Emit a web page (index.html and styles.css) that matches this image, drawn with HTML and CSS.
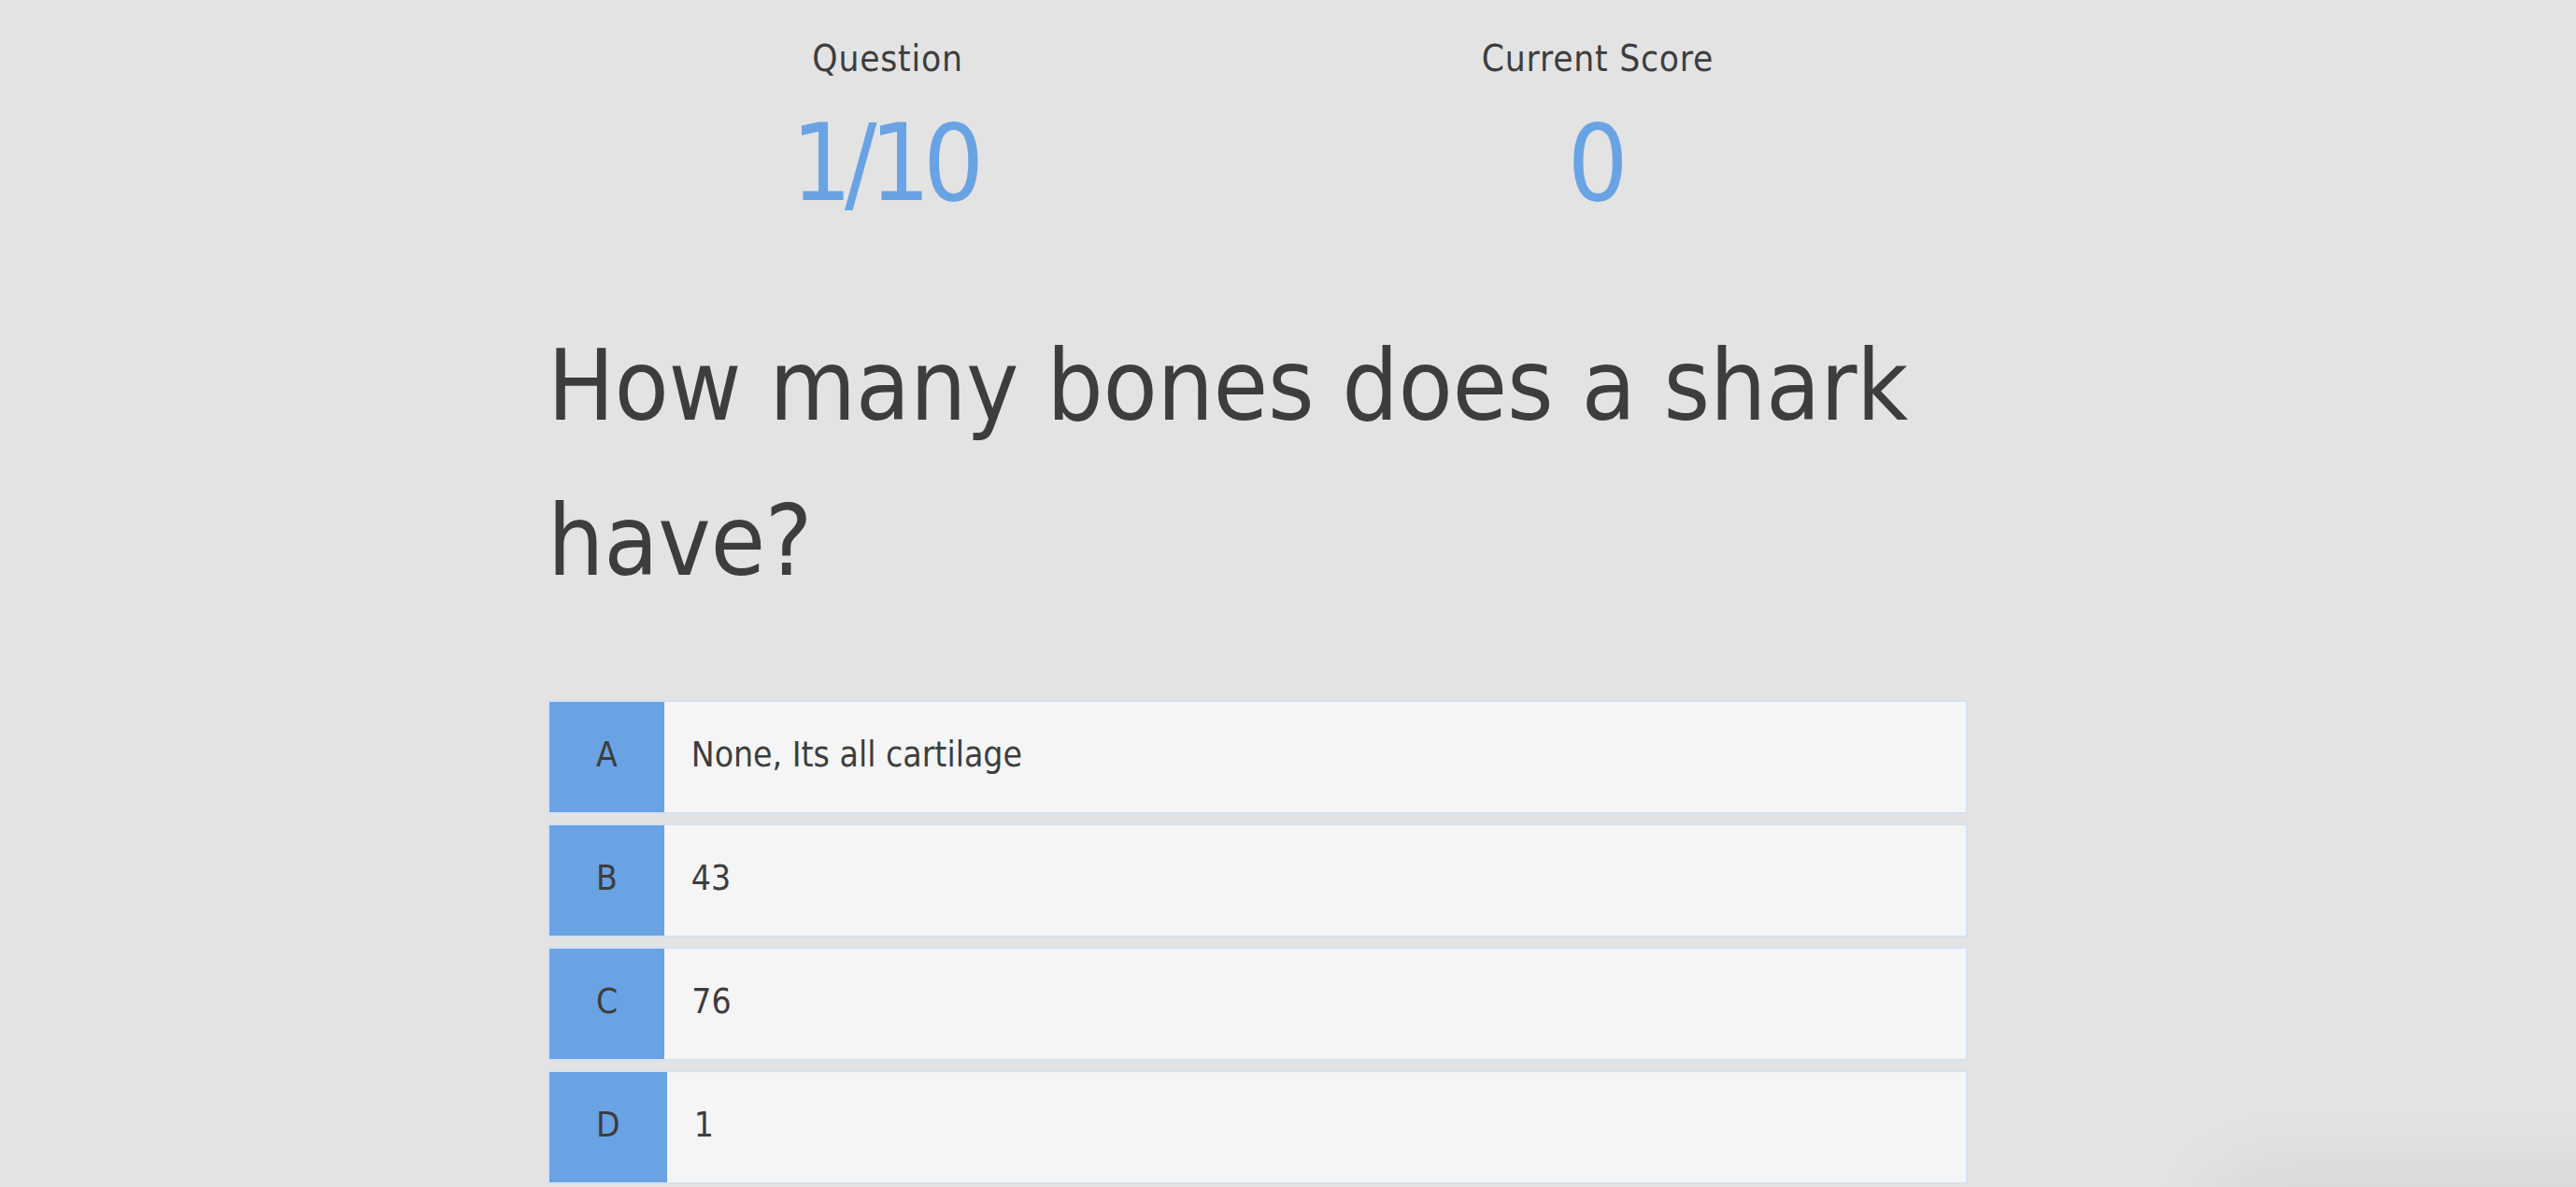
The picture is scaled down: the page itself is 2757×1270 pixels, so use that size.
FILE: index.html
```html
<!DOCTYPE html>
<html lang="en">
<head>
<meta charset="utf-8">
<title>Quiz</title>
<link rel="stylesheet" href="styles.css">
</head>
<body>
<div class="page">
  <main class="quiz">
    <header class="hud">
      <div class="hud-item">
        <div class="hud-label">Question</div>
        <div class="hud-value">1/10</div>
      </div>
      <div class="hud-item">
        <div class="hud-label">Current Score</div>
        <div class="hud-value">0</div>
      </div>
    </header>
    <h1 class="question">How many bones does a shark have?</h1>
    <div class="choices">
      <div class="choice"><span class="choice-prefix">A</span><span class="choice-text">None, Its all cartilage</span></div>
      <div class="choice"><span class="choice-prefix">B</span><span class="choice-text">43</span></div>
      <div class="choice"><span class="choice-prefix">C</span><span class="choice-text">76</span></div>
      <div class="choice"><span class="choice-prefix">D</span><span class="choice-text">1</span></div>
    </div>
  </main>
</div>
<div class="corner-shadow"></div>
</body>
</html>
```

FILE: styles.css
```css
html, body {
  margin: 0;
  padding: 0;
  height: 100%;
  overflow: hidden;
}

body {
  background: #e3e3e3;
  color: #3d3d3d;
  font-family: "DejaVu Sans Condensed", "DejaVu Sans", sans-serif;
  font-stretch: condensed;
}

.page {
  padding-right: 65px;
}

.quiz {
  width: 1520px;
  margin: 0 auto;
}

.hud {
  display: flex;
  margin: 0 16px 0 -16px;
  padding-top: 41px;
}

.hud-item {
  flex: 1;
  text-align: center;
}

.hud-label {
  font-size: 38.5px;
  line-height: 44px;
  letter-spacing: 0.8px;
}

.hud-value {
  margin-top: 20px;
  font-size: 114px;
  line-height: 140px;
  color: #69a3e4;
  letter-spacing: -0.07em;
  padding-right: 0.07em;
}

.question {
  margin: 85px 0 0;
  font-size: 106px;
  line-height: 166px;
  font-weight: normal;
  letter-spacing: -0.3px;
  color: #3d3d3d;
}

.choices {
  margin-top: 87px;
  display: flex;
  flex-direction: column;
  gap: 10px;
}

.choice {
  display: flex;
  height: 118px;
  border: 2px solid #d4e1f3;
  background: #f5f5f5;
  font-size: 37px;
}

.choice-prefix {
  display: flex;
  align-items: center;
  padding: 0 50px 6px;
  background: #69a3e4;
  color: #3d3d3d;
}

.choice-text {
  display: flex;
  align-items: center;
  padding: 0 0 6px 29px;
}

.corner-shadow {
  position: fixed;
  right: -60px;
  bottom: -70px;
  width: 420px;
  height: 50px;
  border-radius: 40px;
  box-shadow: 0 0 90px 30px rgba(0, 0, 0, 0.07);
  background: rgba(0, 0, 0, 0.06);
}
```
